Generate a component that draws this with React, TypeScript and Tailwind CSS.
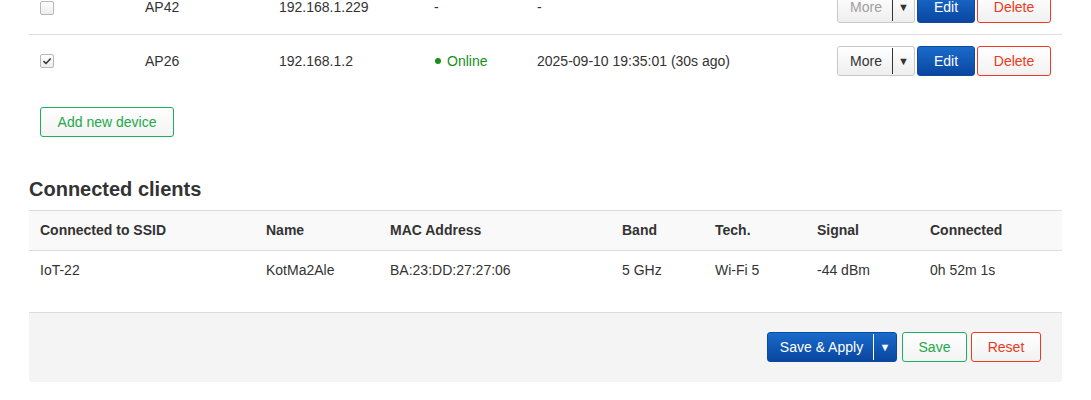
// Device list and connected clients panel
const font = { fontFamily: '"Liberation Sans", Arial, sans-serif' };

function Checkbox({ checked }: { checked?: boolean }) {
  return (
    <div className="w-[14px] h-[14px] rounded-[2px] border border-[#b8b8b8] bg-gradient-to-b from-white to-[#ececec] flex items-center justify-center">
      {checked && (
        <svg width="10" height="10" viewBox="0 0 10 10">
          <path d="M1.5 5.2 L4 7.5 L8.7 2.5" fill="none" stroke="#333" strokeWidth="1.6" />
        </svg>
      )}
    </div>
  );
}

function SplitMore({ disabled }: { disabled?: boolean }) {
  return (
    <div className="flex h-[30px] w-[78px] rounded-[3px] border border-[#c8c8c8] bg-gradient-to-b from-white to-[#eeeeee]">
      <span className={`flex-1 flex items-center justify-center pl-[2px] ${disabled ? 'text-[#a0a0a0]' : 'text-[#333]'}`}>More</span>
      <span className="w-px my-[1px] bg-[#333]" />
      <span className="w-[21px] flex items-center justify-center text-[11px] text-[#333]">▼</span>
    </div>
  );
}

function DeviceRow({ name, ip, status, seen, checked, last }: { name: string; ip: string; status: string; seen: string; checked?: boolean; last?: boolean }) {
  return (
    <div className={`flex items-center pl-[11px] pr-[11px] ${last ? 'h-[52px]' : 'h-[54px] border-b border-[#dddddd]'}`}>
      <div className="w-[105px]"><Checkbox checked={checked} /></div>
      <div className="w-[134px]">{name}</div>
      <div className="w-[155px]">{ip}</div>
      <div className="w-[103px]">
        {status === 'online' ? (
          <span className="text-[#17901a] flex items-center pl-[1px]"><span className="w-[6px] h-[6px] rounded-full bg-[#17901a] mr-[6px]" />Online</span>
        ) : (
          '-'
        )}
      </div>
      <div className="flex-1">{seen}</div>
      <div className="flex gap-[2px]">
        <SplitMore disabled={!checked} />
        <button className="h-[30px] w-[58px] rounded-[3px] border border-[#0c4aa0] bg-gradient-to-b from-[#1a6bcb] to-[#0a46a0] text-white">Edit</button>
        <button className="h-[30px] w-[74px] rounded-[3px] border border-[#ee3a22] bg-gradient-to-b from-white to-[#f1f1f1] text-[#ec3a20]">Delete</button>
      </div>
    </div>
  );
}

const cols = ['w-[226px]', 'w-[124px]', 'w-[232px]', 'w-[93px]', 'w-[102px]', 'w-[113px]', 'flex-1'];
const headers = ['Connected to SSID', 'Name', 'MAC Address', 'Band', 'Tech.', 'Signal', 'Connected'];
const client = ['IoT-22', 'KotMa2Ale', 'BA:23:DD:27:27:06', '5 GHz', 'Wi-Fi 5', '-44 dBm', '0h 52m 1s'];

export default function App() {
  return (
    <div className="h-[400px] overflow-hidden bg-white text-[14px] text-[#333]" style={font}>
      <div className="px-[29px] -mt-[19px]">
        <DeviceRow name="AP42" ip="192.168.1.229" status="-" seen="-" />
        <DeviceRow name="AP26" ip="192.168.1.2" status="online" seen="2025-09-10 19:35:01 (30s ago)" checked last />

        <button className="mt-[20px] ml-[11px] h-[30px] w-[134px] rounded-[3px] border border-[#1bb05c] bg-gradient-to-b from-white to-[#f3f3f3] text-[#23a84a]">
          Add new device
        </button>

        <h2 className="mt-[41px] text-[20px] font-bold leading-[23px] text-[#333]">Connected clients</h2>

        <div className="mt-[9px] border-t border-[#dddddd]">
          <div className="flex items-center h-[40px] bg-[#f9f9f9] border-b border-[#dddddd] pl-[11px] font-bold">
            {headers.map((h, i) => (
              <div key={h} className={cols[i]}>{h}</div>
            ))}
          </div>
          <div className="flex items-center h-[38px] pl-[11px]">
            {client.map((c, i) => (
              <div key={i} className={cols[i]}>{c}</div>
            ))}
          </div>
        </div>

        <div className="mt-[23px] h-[70px] border-t border-[#dddddd] bg-[#f4f4f4] rounded-b-[3px] flex items-start justify-end pt-[19px] pr-[21px]">
          <div className="flex h-[30px] w-[130px] rounded-[3px] border border-[#0c4aa0] bg-gradient-to-b from-[#1a6bcb] to-[#0a46a0] text-white">
            <span className="flex-1 flex items-center justify-center pl-[2px]">Save &amp; Apply</span>
            <span className="w-px my-[1px] bg-white" />
            <span className="w-[22px] flex items-center justify-center text-[11px]">▼</span>
          </div>
          <button className="ml-[5px] h-[30px] w-[65px] rounded-[3px] border border-[#1bb05c] bg-gradient-to-b from-white to-[#f3f3f3] text-[#23a84a]">Save</button>
          <button className="ml-[4px] h-[30px] w-[70px] rounded-[3px] border border-[#ee3a22] bg-gradient-to-b from-white to-[#f1f1f1] text-[#ec3a20]">Reset</button>
        </div>
      </div>
    </div>
  );
}
